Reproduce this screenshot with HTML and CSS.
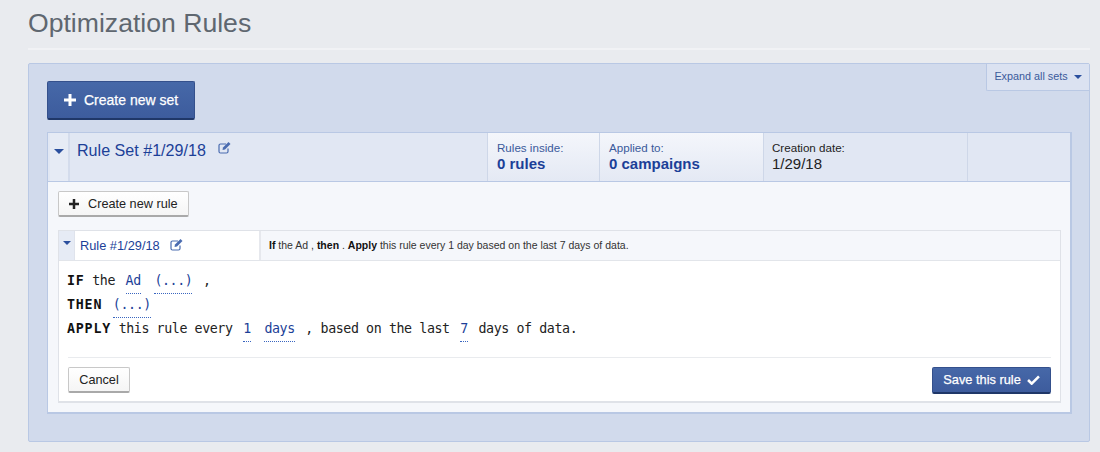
FILE: index.html
```html
<!DOCTYPE html>
<html lang="en">
<head>
    <meta charset="UTF-8">
    <title>Optimization Rules</title>
    <link rel="stylesheet" href="styles.css">
</head>
<body>
    <h1 class="page-title">Optimization Rules</h1>
    <div class="panel">
        <a class="expand-tab">Expand all sets <span class="caret caret-small"></span></a>
        <button class="btn btn-primary btn-set">
            <svg class="icon-plus" viewBox="0 0 12 12"><path d="M4.500 0h3v4.500H12v3H7.500V12h-3V7.500H0v-3h4.500z"/></svg>
            Create new set
        </button>
        <div class="rule-set">
            <div class="set-header">
                <div class="set-toggle"><span class="caret"></span></div>
                <div class="set-name">
                    <span>Rule Set #1/29/18</span>
                    <svg class="icon-edit" viewBox="0 0 14 13"><path d="M10 7.500v3a1.500 1.500 0 0 1-1.500 1.500h-6A1.500 1.500 0 0 1 1 10.500v-6A1.500 1.500 0 0 1 2.500 3H8"/><path class="fill" d="M5 6.500 10.500 1l2 2L7 8.500l-2.500.5z"/></svg>
                </div>
                <div class="set-cell cell-rules"><span class="cell-label">Rules inside:</span><strong>0 rules</strong></div>
                <div class="set-cell cell-campaigns"><span class="cell-label">Applied to:</span><strong>0 campaigns</strong></div>
                <div class="set-cell cell-date"><span class="cell-label">Creation date:</span><span class="cell-value">1/29/18</span></div>
                <div class="set-cell cell-empty"></div>
            </div>
            <div class="set-body">
                <button class="btn btn-default btn-rule">
                    <svg class="icon-plus" viewBox="0 0 12 12"><path d="M4.500 0h3v4.500H12v3H7.500V12h-3V7.500H0v-3h4.500z"/></svg>
                    Create new rule
                </button>
                <div class="rule-card">
                    <div class="rule-header">
                        <div class="rule-toggle"><span class="caret caret-small"></span></div>
                        <div class="rule-name">
                            <span>Rule #1/29/18</span>
                            <svg class="icon-edit" viewBox="0 0 14 13"><path d="M10 7.500v3a1.500 1.500 0 0 1-1.500 1.500h-6A1.500 1.500 0 0 1 1 10.500v-6A1.500 1.500 0 0 1 2.500 3H8"/><path class="fill" d="M5 6.500 10.500 1l2 2L7 8.500l-2.500.5z"/></svg>
                        </div>
                        <div class="rule-summary"><b>If</b> the Ad , <b>then</b> . <b>Apply</b> this rule every 1 day based on the last 7 days of data.</div>
                    </div>
                    <div class="rule-body">
                        <div class="rule-line"><b>IF</b> the <a>Ad</a> <a>(...)</a> ,</div>
                        <div class="rule-line"><b>THEN</b> <a>(...)</a></div>
                        <div class="rule-line"><b>APPLY</b> this rule every <a>1</a> <a>days</a> , based on the last <a>7</a> days of data.</div>
                    </div>
                    <div class="rule-footer">
                        <button class="btn btn-default btn-cancel">Cancel</button>
                        <button class="btn btn-primary btn-save">
                            Save this rule
                            <svg class="icon-check" viewBox="0 0 14 11"><path d="M1 5.500 5 9.500 13 1.500" /></svg>
                        </button>
                    </div>
                </div>
            </div>
        </div>
    </div>
</body>
</html>
```
FILE: styles.css
```css
body {
    margin: 0;
    height: 452px;
    overflow: hidden;
    padding: 0 10px 0 28px;
    background-color: #e9ebef;
    font-family: "Liberation Sans", Arial, sans-serif;
    color: #222;
}
.page-title {
    margin: 0 0 13px;
    height: 48px;
    line-height: 46px;
    font-size: 26.600px;
    font-weight: normal;
    color: #5f6770;
    border-bottom: 2px solid #f1f2f5;
}
.panel {
    position: relative;
    box-sizing: border-box;
    height: 379px;
    padding: 17px 17px 0 18px;
    background-color: #d1daec;
    border: 1px solid #b9c8e4;
    border-radius: 2px;
}
.expand-tab {
    position: absolute;
    top: 0;
    right: 0;
    width: 102px;
    height: 26px;
    line-height: 25px;
    text-align: center;
    font-size: 10.800px;
    color: #3a5a9b;
    background-color: #dbe2f1;
    border-left: 1px solid #b9c8e4;
    border-bottom: 1px solid #b9c8e4;
    border-bottom-left-radius: 2px;
}
.caret {
    display: inline-block;
    width: 0;
    height: 0;
    border-left: 5px solid transparent;
    border-right: 5px solid transparent;
    border-top: 5px solid #2a4f9e;
    vertical-align: middle;
}
.caret-small {
    border-left-width: 4px;
    border-right-width: 4px;
    border-top-width: 4px;
    margin-left: 3px;
}
.btn {
    display: flex;
    align-items: center;
    box-sizing: border-box;
    font-family: inherit;
    border-radius: 2px;
    cursor: pointer;
}
.btn-primary {
    color: #fff;
    background: linear-gradient(#4668a8, #3d5c9d);
    border: 1px solid #34508c;
    border-bottom: 2px solid #1f3768;
    -webkit-text-stroke: .25px #fff;
}
.btn-default {
    color: #222;
    background: linear-gradient(#fff, #f5f5f5);
    border: 1px solid #c8c8c8;
    border-bottom: 2px solid #a9a9a9;
}
.btn-set {
    width: 148px;
    height: 39px;
    padding: 0 0 0 16px;
    gap: 8px;
    font-size: 14px;
}
.btn-rule {
    width: 131px;
    height: 26px;
    padding: 0 0 0 10px;
    gap: 9px;
    font-size: 12.700px;
}
.icon-plus {
    width: 12px;
    height: 12px;
    fill: currentColor;
}
.btn-rule .icon-plus {
    width: 10px;
    height: 10px;
}
.icon-edit {
    width: 14px;
    height: 13px;
    fill: none;
    stroke: #4a6cb0;
    stroke-width: 1.200;
}
.icon-edit .fill {
    fill: #4a6cb0;
    stroke: none;
}
.rule-set {
    margin-top: 12px;
    height: 282px;
    box-sizing: border-box;
    background-color: #f5f7fb;
    border: 2px solid #b9c8e4;
    border-left-width: 1px;
    border-top-width: 1px;
}
.set-header {
    display: flex;
    height: 48px;
    background-color: #e1e7f3;
    border-bottom: 1px solid #b9c8e4;
}
.set-toggle {
    width: 18px;
    margin-left: 2px;
    border-right: 2px solid #d4dcec;
    text-align: center;
    padding-top: 9px;
    background-color: #e6ebf5;
}
.set-name {
    flex: 1;
    display: flex;
    align-items: flex-start;
    gap: 12px;
    padding: 7px 0 0 7px;
    font-size: 16.100px;
    line-height: 20px;
    color: #1c3f98;
}
.set-name .icon-edit {
    margin-top: 1px;
}
.set-cell {
    display: flex;
    flex-direction: column;
    box-sizing: border-box;
    padding-top: 8px;
    font-size: 11.600px;
    line-height: 14px;
    border-left: 1px solid #ced7e8;
}
.set-cell strong {
    font-size: 15px;
    line-height: 17px;
    color: #1c3f98;
}
.cell-rules, .cell-campaigns {
    background: linear-gradient(#f4f6fb, #e4e9f4);
    color: #3a5a9b;
}
.cell-rules {
    width: 112px;
    padding-left: 9px;
}
.cell-campaigns {
    width: 164px;
    padding-left: 9px;
}
.cell-date {
    width: 204px;
    padding-left: 8px;
}
.cell-value {
    font-size: 15px;
    line-height: 17px;
}
.cell-empty {
    width: 103px;
}
.set-body {
    padding: 9px 9px 9px 10px;
}
.rule-card {
    margin-top: 13px;
    height: 173px;
    box-sizing: border-box;
    display: flex;
    flex-direction: column;
    background-color: #fff;
    border: 1px solid #dfe2e8;
    border-bottom-width: 2px;
}
.rule-header {
    display: flex;
    height: 29px;
    flex-shrink: 0;
    background-color: #f5f7fb;
    border-bottom: 1px solid #e2e5ea;
}
.rule-toggle {
    width: 15px;
    padding-top: 10px;
    background-color: #e6ebf5;
    border-right: 1px solid #dfe3ec;
}
.rule-toggle .caret-small {
    display: block;
    margin-left: 4px;
}
.rule-name {
    width: 186px;
    box-sizing: border-box;
    display: flex;
    align-items: center;
    gap: 10px;
    padding: 0 0 0 5px;
    font-size: 12.800px;
    color: #1c3f98;
    background-color: #fff;
    border-right: 2px solid #e6e8ed;
}
.rule-name .icon-edit {
    margin-top: -3px;
}
.rule-summary {
    padding-left: 8px;
    line-height: 29px;
    font-size: 10.500px;
    color: #333;
}
.rule-summary b {
    color: #111;
}
.rule-body {
    flex: 1;
    padding: 8px 0 0 8px;
    font-family: "DejaVu Sans Mono", monospace;
    font-size: 13.300px;
    letter-spacing: -.41px;
    color: #222;
}
.rule-line {
    height: 24px;
    line-height: 24px;
}
.rule-line b {
    color: #111;
    letter-spacing: .8px;
}
.rule-line a {
    display: inline-block;
    height: 24px;
    line-height: 24px;
    margin: 0 3px;
    color: #1c3f98;
    border-bottom: 1px dotted #3a66c0;
}
.rule-footer {
    display: flex;
    justify-content: space-between;
    align-items: flex-start;
    height: 44px;
    box-sizing: border-box;
    margin: 0 9px;
    padding-top: 9px;
    border-top: 1px solid #e9ebee;
}
.btn-cancel {
    width: 62px;
    height: 26px;
    justify-content: center;
    font-size: 12.700px;
}
.btn-save {
    width: 119px;
    height: 27px;
    padding-bottom: 2px;
    justify-content: center;
    gap: 6px;
    font-size: 12.800px;
}
.icon-check {
    width: 13px;
    height: 10px;
    fill: none;
    stroke: #fff;
    stroke-width: 2.800;
}
```
